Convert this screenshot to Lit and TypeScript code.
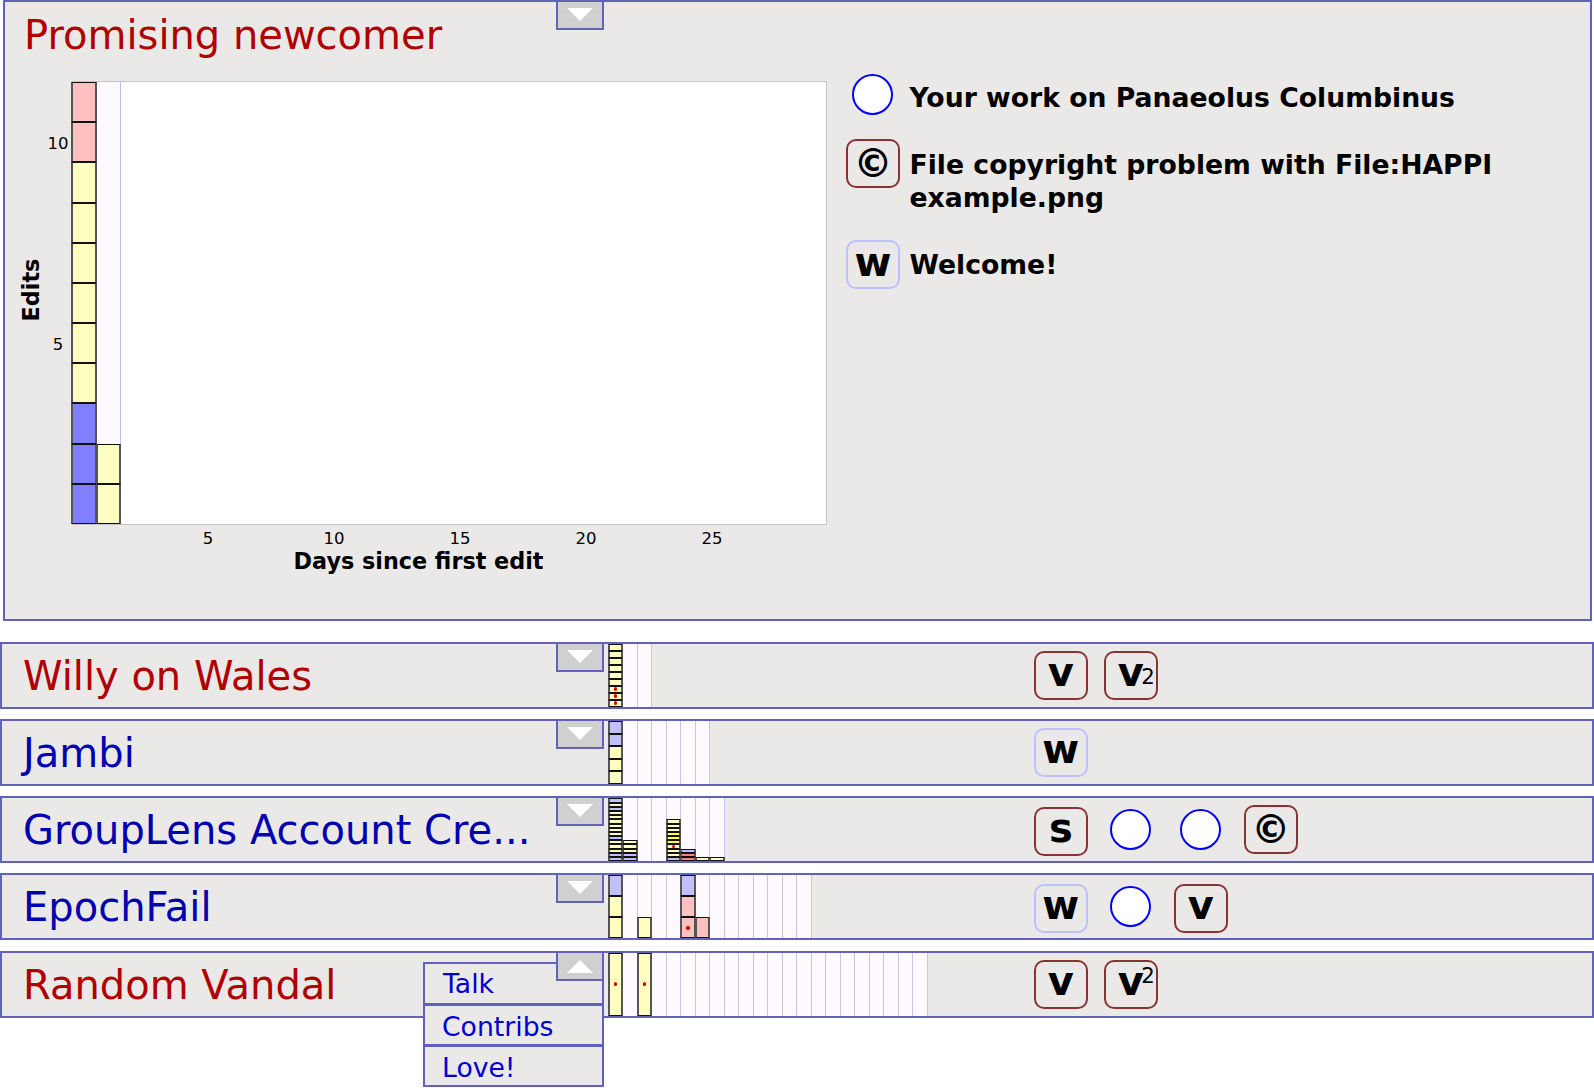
import { LitElement, html, css, nothing } from "lit";
import { customElement } from "lit/decorators.js";

type Seg = { c: string; dot?: boolean };
const y = (dot = false): Seg => ({ c: "y", dot });
const b = (): Seg => ({ c: "b" });
const p = (dot = false): Seg => ({ c: "p", dot });
const o = (): Seg => ({ c: "o" });
const r = (): Seg => ({ c: "r" });

type Badge = { kind: "m" | "g" | "c"; t?: string; sup?: string; low?: boolean; hi?: boolean; lo?: boolean };

type Row = {
  name: string;
  color: string;
  unit: number;
  cols: number;
  bars: Record<number, Seg[]>;
  badges: Badge[];
  open?: boolean;
};

const rows: Row[] = [
  {
    name: "Willy on Wales", color: "red", unit: 7, cols: 3,
    bars: { 0: [y(true), y(true), y(true), y(), y(), y(), y(), y(), y()] },
    badges: [{ kind: "m", t: "v" }, { kind: "m", t: "v", sup: "2", low: true }],
  },
  {
    name: "Jambi", color: "blue", unit: 12.6, cols: 7,
    bars: { 0: [y(), y(), y(), b(), b()] },
    badges: [{ kind: "g", t: "w" }],
  },
  {
    name: "GroupLens Account Cre...", color: "blue", unit: 4.2, cols: 8,
    bars: {
      0: [b(), b(), y(), y(), y(), b(), y(), y(), y(), y(), y(), y(), b(), y(), b()],
      1: [b(), b(), y(), y(), y()],
      4: [b(), y(), y(), y(true), o(), o(), o(), y(), y(), y()],
      5: [r(), r(), b()],
      6: [y()],
      7: [y()],
    },
    badges: [{ kind: "m", t: "s", lo: true }, { kind: "c" }, { kind: "c" }, { kind: "m", t: "©", hi: true }],
  },
  {
    name: "EpochFail", color: "blue", unit: 21, cols: 14,
    bars: { 0: [y(), y(), b()], 2: [y()], 5: [p(true), p(), b()], 6: [p()] },
    badges: [{ kind: "g", t: "w", lo: true }, { kind: "c" }, { kind: "m", t: "v", lo: true }],
  },
  {
    name: "Random Vandal", color: "red", unit: 63, cols: 22,
    bars: { 0: [y(true)], 2: [y(true)] },
    badges: [{ kind: "m", t: "v" }, { kind: "m", t: "v", sup: "2" }],
    open: true,
  },
];

const bigCols: string[][] = [
  ["B", "B", "B", "y", "y", "y", "y", "y", "y", "p", "p"],
  ["y", "y"],
];

@customElement("app-root")
export class AppRoot extends LitElement {
  static styles = css`
    :host {
      display: block;
      width: 1594px;
      height: 1088px;
      overflow: hidden;
      background: #fff;
      font-family: "DejaVu Sans", sans-serif;
      color: #000;
    }
    .panel {
      position: relative;
      box-sizing: border-box;
      background: #eae9e8;
      border: 2px solid #6262bb;
    }
    .big {
      height: 621px;
      margin: 0 2px 20.7px 3px;
      padding: 0 20px;
    }
    .toggle {
      position: absolute;
      top: -2px;
      left: 551px;
      box-sizing: border-box;
      width: 48px;
      height: 30px;
      background: #d0d0d0;
      border: 2px solid #6262bb;
      display: flex;
      align-items: center;
      justify-content: center;
      z-index: 3;
    }
    .row .toggle { left: 554px; }
    .tri {
      width: 26px;
      height: 14px;
      fill: #fff;
    }
    .title {
      font-size: 40px;
      line-height: 50px;
      white-space: nowrap;
      margin: 0;
      font-weight: 400;
    }
    .red { color: #b00000; }
    .blue { color: #0000b0; }
    .big .title { padding-top: 8px; height: 71px; margin-left: -1px; }
    .bigbody { display: flex; }
    .yaxis {
      width: 47px;
      height: 444px;
      position: relative;
      flex: none;
    }
    .ylabel {
      position: absolute;
      left: -6px;
      top: 197px;
      font-size: 22.3px;
      font-weight: 700;
      line-height: 24px;
      transform: rotate(-90deg);
      transform-origin: center;
      width: 24px;
      display: flex;
      justify-content: center;
    }
    .ytick {
      position: absolute;
      right: 2px;
      width: 24px;
      text-align: center;
      font-size: 16.5px;
      line-height: 20px;
    }
    .chartwrap { width: 755px; flex: none; }
    .plot {
      box-sizing: border-box;
      height: 444px;
      background: #fff;
      border: 1px solid #c4c4c4;
      border-left: 0;
      display: flex;
    }
    .bigcol {
      box-sizing: border-box;
      width: 24.5px;
      height: 100%;
      background: #fdf9ff;
      border-right: 1px solid #c0c0ee;
      display: flex;
      flex-direction: column-reverse;
      flex: none;
    }
    .bigcol .seg {
      height: 40.2px;
      flex: none;
      width: calc(100% + 2px);
      margin-left: -1px;
    }
    .seg {
      box-sizing: border-box;
      border-style: solid;
      border-color: #111 #555;
      border-width: 1px 2px;
      position: relative;
      z-index: 1;
    }
    .seg.y { background: #ffffc0; }
    .seg.b { background: #c0c0ff; }
    .seg.B { background: #8080ff; }
    .seg.p { background: #ffc0c0; }
    .seg.o { background: #ffff40; }
    .seg.r { background: #ff8080; }
    .dot {
      position: absolute;
      left: 50%;
      top: 50%;
      width: 3.5px;
      height: 3.5px;
      margin: -1.75px 0 0 -1.75px;
      border-radius: 50%;
      background: #d00000;
    }
    .xticks {
      display: flex;
      height: 26px;
      align-items: center;
      padding-left: 73px;
      font-size: 16.5px;
    }
    .xtick { width: 126px; text-align: center; flex: none; }
    .xlabel {
      font-size: 22.3px;
      font-weight: 700;
      line-height: 20px;
      text-align: center;
      padding-right: 62px;
    }
    .list {
      margin-left: 19px;
      display: flex;
      flex-direction: column;
      flex: 1;
    }
    .item {
      display: flex;
      font-size: 26.66px;
      font-weight: 700;
      line-height: 33px;
      align-items: flex-start;
    }
    .item .slot { flex: none; width: 63.5px; display: flex; justify-content: flex-start; }
    .item .t { flex: 1; }
    .item1 { height: 60px; }
    .item1 .circ { margin-left: 6px; margin-top: -7px; }
    .item2 { height: 100px; }
    .item2 .t, .item3 .t { padding-top: 7px; }
    .item2 .badge { margin-top: -2px; }
    .item3 .badge { margin-top: -1px; }
    .badge {
      box-sizing: border-box;
      width: 54px;
      height: 49px;
      border: 2.5px solid #883333;
      border-radius: 10px;
      display: flex;
      align-items: center;
      justify-content: center;
      font-size: 40px;
      font-weight: 700;
      line-height: 1;
      position: relative;
      flex: none;
      padding-bottom: 6px;
    }
    .badge.sym { padding-bottom: 0; font-size: 39px; }
    .badge.g { border-color: #c0c0ff; }
    .sup {
      position: absolute;
      font-size: 21.33px;
      font-weight: 400;
      right: 1px;
      top: 2px;
      line-height: 24px;
    }
    .sup.low { top: 12px; }
    .circ {
      box-sizing: border-box;
      width: 41px;
      height: 41px;
      border-radius: 50%;
      background: #fff;
      border: 2px solid #0000ff;
      flex: none;
    }
    .rows {
      display: flex;
      flex-direction: column;
      gap: 10.25px;
    }
    .row {
      height: 67px;
      display: flex;
    }
    .row .title {
      box-sizing: border-box;
      width: 606.8px;
      padding-left: 21px;
      flex: none;
      line-height: 64px;
    }
    .mini {
      display: flex;
      width: 417px;
      flex: none;
      height: 100%;
    }
    .minicol {
      box-sizing: border-box;
      width: 14.5px;
      flex: none;
      background: #fdf9ff;
      border-right: 1px solid #c8c4e8;
      display: flex;
      flex-direction: column-reverse;
    }
    .minicol .seg {
      flex: none;
      width: calc(100% + 2px);
      margin-left: -1px;
    }
    .slots { display: flex; align-items: center; }
    .cell { width: 70px; display: flex; justify-content: center; }
    .cell .badge.hi { margin-top: 0; }
    .cell .badge.lo { margin-top: 3px; }
    .menu {
      position: absolute;
      top: 9.5px;
      left: 421px;
      width: 181px;
      box-sizing: border-box;
      z-index: 2;
      display: flex;
      flex-direction: column;
    }
    .mi {
      box-sizing: border-box;
      background: #eae9e8;
      border: 2px solid #6262bb;
      color: #0000d0;
      font-size: 26.66px;
      height: 42.4px;
      line-height: 41px;
      padding-left: 17px;
      margin-bottom: -1px;
    }
    .mi:first-child { padding-left: 18px; line-height: 40px; }
  `;

  private tri(up = false) {
    return html`<svg class="tri" viewBox="0 0 26 14">
      <polygon points=${up ? "13,1 26,14 0,14" : "0,0 26,0 13,13"}></polygon>
    </svg>`;
  }

  private badge(x: Badge) {
    if (x.kind === "c") return html`<div class="circ"></div>`;
    const cls = `badge ${x.kind} ${x.t === "©" ? "sym" : ""} ${x.hi ? "hi" : ""} ${x.lo ? "lo" : ""}`;
    return html`<div class=${cls}>
      ${x.t}${x.sup ? html`<span class="sup ${x.low ? "low" : ""}">${x.sup}</span>` : nothing}
    </div>`;
  }

  private row(r: Row) {
    const cols = Array.from({ length: r.cols }, (_, i) => r.bars[i] ?? []);
    return html`<div class="panel row">
      <h2 class="title ${r.color}">${r.name}</h2>
      <div class="toggle">${this.tri(r.open)}</div>
      <div class="mini">
        ${cols.map(
          (segs) => html`<div class="minicol">
            ${segs.map(
              (s) => html`<div class="seg ${s.c}" style="height:${r.unit}px">
                ${s.dot ? html`<span class="dot"></span>` : nothing}
              </div>`
            )}
          </div>`
        )}
      </div>
      <div class="slots">
        ${r.badges.map((x) => html`<div class="cell">${this.badge(x)}</div>`)}
      </div>
      ${r.open
        ? html`<div class="menu">
            <div class="mi">Talk</div>
            <div class="mi">Contribs</div>
            <div class="mi">Love!</div>
          </div>`
        : nothing}
    </div>`;
  }

  render() {
    return html`
      <div class="panel big">
        <h1 class="title red">Promising newcomer</h1>
        <div class="toggle">${this.tri()}</div>
        <div class="bigbody">
          <div class="yaxis">
            <div class="ylabel"><span>Edits</span></div>
            <span class="ytick" style="top:53px">10</span>
            <span class="ytick" style="top:254px">5</span>
          </div>
          <div class="chartwrap">
            <div class="plot">
              ${bigCols.map(
                (c) => html`<div class="bigcol">
                  ${c.map((k) => html`<div class="seg ${k}"></div>`)}
                </div>`
              )}
            </div>
            <div class="xticks">
              ${[5, 10, 15, 20, 25].map((n) => html`<span class="xtick">${n}</span>`)}
            </div>
            <div class="xlabel">Days since first edit</div>
          </div>
          <div class="list">
            <div class="item item1">
              <div class="slot"><div class="circ"></div></div>
              <div class="t">Your work on Panaeolus Columbinus</div>
            </div>
            <div class="item item2">
              <div class="slot"><div class="badge sym">©</div></div>
              <div class="t">File copyright problem with File:HAPPI example.png</div>
            </div>
            <div class="item item3">
              <div class="slot"><div class="badge g">w</div></div>
              <div class="t">Welcome!</div>
            </div>
          </div>
        </div>
      </div>
      <div class="rows">${rows.map((r) => this.row(r))}</div>
    `;
  }
}
